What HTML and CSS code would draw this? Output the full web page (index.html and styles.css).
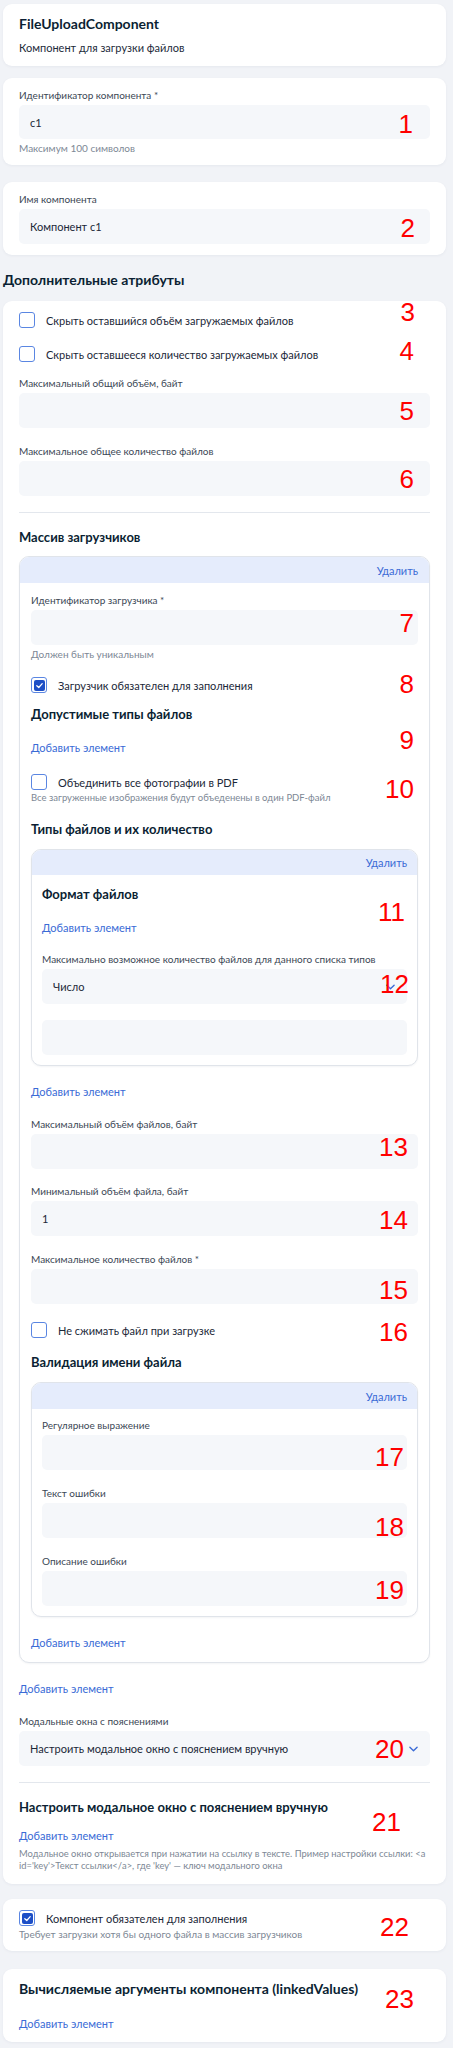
FILE: index.html
```html
<!DOCTYPE html>
<html lang="ru">
<head>
<meta charset="utf-8">
<title>FileUploadComponent</title>
<link rel="stylesheet" href="styles.css">
</head>
<body>
<div class="page">
  <div class="card card-head">
    <div class="title">FileUploadComponent</div>
    <div class="subtitle">Компонент для загрузки файлов</div>
  </div>

  <div class="card card-field card-id">
    <div class="label">Идентификатор компонента *</div>
    <div class="input">c1</div>
    <div class="hint h-id">Максимум 100 символов</div>
  </div>

  <div class="card card-field card-name">
    <div class="label">Имя компонента</div>
    <div class="input">Компонент с1</div>
  </div>

  <div class="section-title">Дополнительные атрибуты</div>

  <div class="card card-big">
    <div class="cb-row"><span class="cb"></span><span>Скрыть оставшийся объём загружаемых файлов</span></div>
    <div class="cb-row mt18"><span class="cb"></span><span>Скрыть оставшееся количество загружаемых файлов</span></div>
    <div class="label mt14">Максимальный общий объём, байт</div>
    <div class="input"></div>
    <div class="label mt16">Максимальное общее количество файлов</div>
    <div class="input"></div>
    <div class="divider mt16"></div>
    <div class="h13 mt15">Массив загрузчиков</div>

    <div class="arr mt10">
      <div class="arr-head"><span class="link">Удалить</span></div>
      <div class="arr-body">
        <div class="label mt10">Идентификатор загрузчика *</div>
        <div class="input"></div>
        <div class="hint mt2">Должен быть уникальным</div>
        <div class="cb-row mt16"><span class="cb checked"><svg viewBox="0 0 10 10" width="8" height="8"><polyline points="2,5.2 4.2,7.2 8,3" fill="none" stroke="#fff" stroke-width="1.4" stroke-linecap="round" stroke-linejoin="round"/></svg></span><span>Загрузчик обязателен для заполнения</span></div>
        <div class="h13 mt12">Допустимые типы файлов</div>
        <div class="link-row mt17"><span class="link">Добавить элемент</span></div>
        <div class="cb-row mt18"><span class="cb"></span><span>Объединить все фотографии в PDF</span></div>
        <div class="hint hint-sm mt1">Все загруженные изображения будут объеденены в один PDF-файл</div>
        <div class="h13 mt16">Типы файлов и их количество</div>

        <div class="arr nested mt11">
          <div class="arr-head n1"><span class="link">Удалить</span></div>
          <div class="arr-body">
            <div class="h13 mt10">Формат файлов</div>
            <div class="link-row mt17"><span class="link">Добавить элемент</span></div>
            <div class="label mt16">Максимально возможное количество файлов для данного списка типов</div>
            <div class="input select"><span>Число</span><svg class="chev" viewBox="0 0 10 6" width="9" height="6"><polyline points="1,1 5,5 9,1" fill="none" stroke="#3a6bd6" stroke-width="1.5" stroke-linecap="round" stroke-linejoin="round"/></svg></div>
            <div class="input mt16"></div>
          </div>
        </div>

        <div class="link-row mt18"><span class="link">Добавить элемент</span></div>
        <div class="label mt17">Максимальный объём файлов, байт</div>
        <div class="input"></div>
        <div class="label mt15">Минимальный объём файла, байт</div>
        <div class="input">1</div>
        <div class="label mt16">Максимальное количество файлов *</div>
        <div class="input"></div>
        <div class="cb-row mt18"><span class="cb"></span><span>Не сжимать файл при загрузке</span></div>
        <div class="h13 mt15">Валидация имени файла</div>

        <div class="arr nested mt11">
          <div class="arr-head"><span class="link">Удалить</span></div>
          <div class="arr-body">
            <div class="label mt9">Регулярное выражение</div>
            <div class="input"></div>
            <div class="label mt16">Текст ошибки</div>
            <div class="input"></div>
            <div class="label mt16">Описание ошибки</div>
            <div class="input"></div>
          </div>
        </div>

        <div class="link-row mt18"><span class="link">Добавить элемент</span></div>
      </div>
    </div>

    <div class="link-row mt18"><span class="link">Добавить элемент</span></div>
    <div class="label mt17">Модальные окна с пояснениями</div>
    <div class="input select"><span>Настроить модальное окно с пояснением вручную</span><svg class="chev" viewBox="0 0 10 6" width="9" height="6"><polyline points="1,1 5,5 9,1" fill="none" stroke="#3a6bd6" stroke-width="1.5" stroke-linecap="round" stroke-linejoin="round"/></svg></div>
    <div class="divider mt16"></div>
    <div class="h13 mt15">Настроить модальное окно с пояснением вручную</div>
    <div class="link-row mt12"><span class="link">Добавить элемент</span></div>
    <div class="hint hint-long mt4"><span class="line">Модальное окно открывается при нажатии на ссылку в тексте. Пример настройки ссылки: &lt;a</span><span class="line">id='key'&gt;Текст ссылки&lt;/a&gt;, где 'key' — ключ модального окна</span></div>
  </div>

  <div class="card card-req">
    <div class="cb-row"><span class="cb checked"><svg viewBox="0 0 10 10" width="8" height="8"><polyline points="2,5.2 4.2,7.2 8,3" fill="none" stroke="#fff" stroke-width="1.4" stroke-linecap="round" stroke-linejoin="round"/></svg></span><span>Компонент обязателен для заполнения</span></div>
    <div class="hint mt1">Требует загрузки хотя бы одного файла в массив загрузчиков</div>
  </div>

  <div class="card card-linked">
    <div class="h14">Вычисляемые аргументы компонента (linkedValues)</div>
    <div class="link-row mt18"><span class="link">Добавить элемент</span></div>
  </div>

  <div class="ann a1">1</div>
  <div class="ann a2">2</div>
  <div class="ann a3">3</div>
  <div class="ann a4">4</div>
  <div class="ann a5">5</div>
  <div class="ann a6">6</div>
  <div class="ann a7">7</div>
  <div class="ann a8">8</div>
  <div class="ann a9">9</div>
  <div class="ann a10">10</div>
  <div class="ann a11">11</div>
  <div class="ann a12">12</div>
  <div class="ann a13">13</div>
  <div class="ann a14">14</div>
  <div class="ann a15">15</div>
  <div class="ann a16">16</div>
  <div class="ann a17">17</div>
  <div class="ann a18">18</div>
  <div class="ann a19">19</div>
  <div class="ann a20">20</div>
  <div class="ann a21">21</div>
  <div class="ann a22">22</div>
  <div class="ann a23">23</div>
</div>
</body>
</html>
```
FILE: styles.css
```css
* { box-sizing: border-box; }
body {
  margin: 0;
  background: #f1f3f7;
  font-family: Lato, "Noto Sans", sans-serif;
  color: #0b1f33;
}
.page {
  position: relative;
  padding: 4px 7px 5px 3px;
}
.card {
  background: #fff;
  border-radius: 9px;
  box-shadow: 0 1px 3px rgba(20, 40, 80, 0.05);
}
.card-head { padding: 10px 16px; margin-bottom: 12px; }
.title { font-size: 14px; font-weight: 700; line-height: 20px; }
.subtitle { font-size: 11px; line-height: 16px; margin-top: 6px; color: #1d2b3a; }

.card-field { padding: 10px 16px 10px; }
.card-id { margin-bottom: 17px; }
.card-name { padding-bottom: 11px; }

.label { font-size: 10px; line-height: 14px; color: #3b4755; }
.input {
  height: 35px;
  margin-top: 3px;
  background: #f5f7fa;
  border-radius: 5px;
  display: flex;
  align-items: center;
  padding: 0 11px;
  font-size: 11px;
  color: #1b2838;
}
.card-id .input { height: 34px; }
.hint { font-size: 10px; line-height: 14px; color: #7d8895; }
.h-id { margin-top: 2px; }
.hint-sm { font-size: 9.5px; line-height: 13px; }
.hint-long { font-size: 9.4px; line-height: 12px; }
.hint-long .line { display: block; white-space: nowrap; }

.section-title {
  font-size: 14px;
  font-weight: 700;
  line-height: 20px;
  margin: 15px 0 11px;
}
.card-big { padding: 11px 16px 12px; }

.cb-row {
  display: flex;
  align-items: center;
  gap: 11px;
  height: 16px;
  font-size: 11px;
  color: #1b2838;
}
.cb {
  flex: none;
  width: 16px;
  height: 16px;
  border: 1.5px solid #5a86e2;
  border-radius: 3px;
  background: #fff;
}
.cb.checked {
  padding: 1.5px;
  display: flex;
}
.cb.checked svg {
  width: 100%;
  height: 100%;
  background: #1d4fc6;
  border-radius: 2px;
  padding: 1px;
}

.divider { height: 1px; background: #e3e7ed; }
.h13 { font-size: 13px; font-weight: 700; line-height: 18px; }
.h14 { font-size: 14px; font-weight: 700; line-height: 18px; }

.link-row { line-height: 16px; font-size: 11px; }
.link { color: #3a6bd6; font-size: 11px; }

.arr {
  border: 1px solid #e0e4ea;
  border-radius: 10px;
  overflow: hidden;
  background: #fff;
  box-shadow: 0 1px 2px rgba(20, 40, 80, 0.05);
}
.arr-head {
  height: 26px;
  background: #e5ecfc;
  display: flex;
  align-items: center;
  justify-content: flex-end;
  padding: 0 11px;
}
.arr-body { padding: 0 11px 11px; }
.nested .arr-head { padding: 0 10px; }
.nested .arr-head.n1 { height: 25px; }
.nested .arr-body { padding: 0 10px 10px; }

.select { justify-content: space-between; }
.chev { flex: none; margin-right: 1px; }

.card-req { margin-top: 15px; padding: 11px 16px 10px; }
.card-linked { margin-top: 18px; padding: 11px 16px 10px; }

.mt1 { margin-top: 1px; }
.mt2 { margin-top: 2px; }
.mt4 { margin-top: 4px; }
.mt9 { margin-top: 9px; }
.mt10 { margin-top: 10px; }
.mt11 { margin-top: 11px; }
.mt12 { margin-top: 12px; }
.mt14 { margin-top: 14px; }
.mt15 { margin-top: 15px; }
.mt16 { margin-top: 16px; }
.mt17 { margin-top: 17px; }
.mt18 { margin-top: 18px; }

.ann {
  position: absolute;
  width: 60px;
  text-align: right;
  font-family: "Liberation Sans", Arial, sans-serif;
  font-size: 26px;
  line-height: 26px;
  color: #ff0000;
}
.a1 { left: 353px; top: 111px; }
.a2 { left: 355px; top: 215px; }
.a3 { left: 355px; top: 299px; }
.a4 { left: 354px; top: 338px; }
.a5 { left: 354px; top: 398px; }
.a6 { left: 354px; top: 466px; }
.a7 { left: 354px; top: 610px; }
.a8 { left: 354px; top: 671px; }
.a9 { left: 354px; top: 727px; }
.a10 { left: 354px; top: 776px; }
.a11 { left: 345px; top: 899px; }
.a12 { left: 349px; top: 971px; }
.a13 { left: 348px; top: 1134px; }
.a14 { left: 348px; top: 1207px; }
.a15 { left: 348px; top: 1277px; }
.a16 { left: 348px; top: 1319px; }
.a17 { left: 344px; top: 1444px; }
.a18 { left: 344px; top: 1514px; }
.a19 { left: 344px; top: 1577px; }
.a20 { left: 344px; top: 1736px; }
.a21 { left: 341px; top: 1809px; }
.a22 { left: 349px; top: 1914px; }
.a23 { left: 354px; top: 1986px; }
```
